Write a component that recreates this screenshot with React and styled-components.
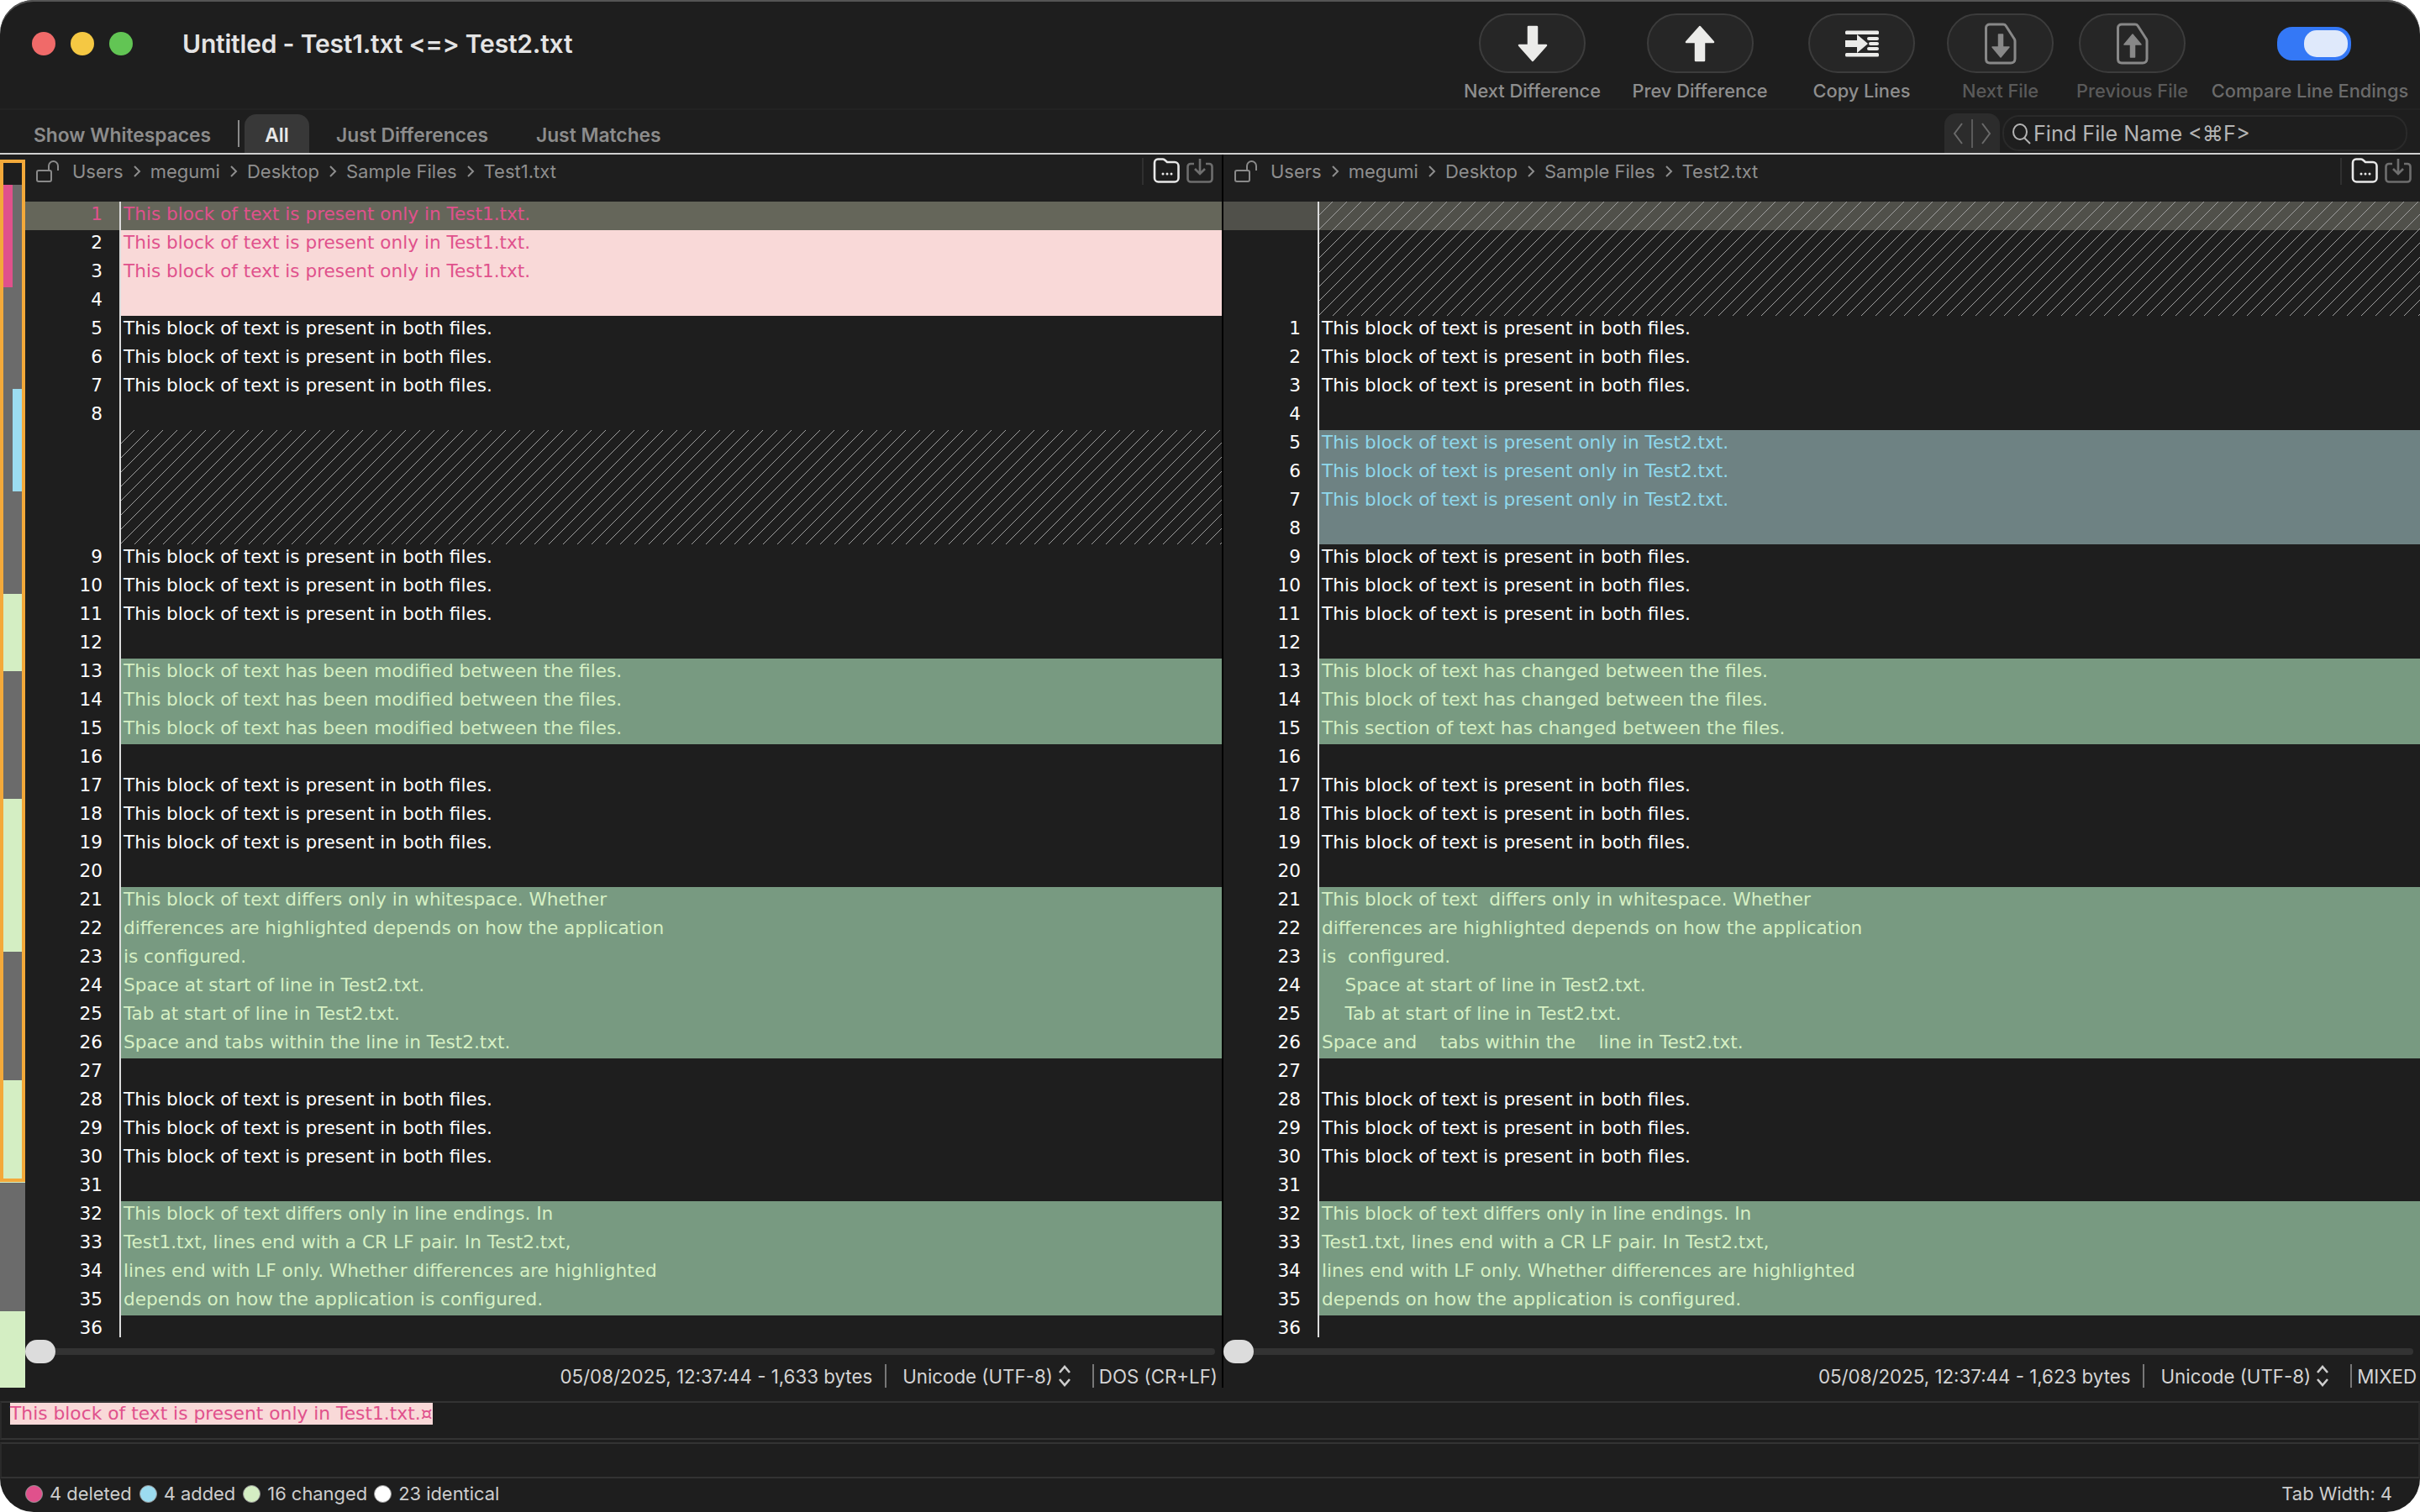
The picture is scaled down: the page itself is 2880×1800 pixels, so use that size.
import React from "react";
import styled, { createGlobalStyle } from "styled-components";

const Global = createGlobalStyle`
  html, body { margin: 0; padding: 0; background: #fff; }
  * { box-sizing: border-box; }
`;
const UI = `Inter, "Liberation Sans", sans-serif`;
const CODE = `"DejaVu Sans", "Noto Sans", sans-serif`;

const Window = styled.div`
  width: 2880px; height: 1800px; background: #1e1e1e; border-radius: 40px;
  overflow: hidden; display: flex; flex-direction: column; font-family: ${UI};
  box-shadow: inset 0 2px 0 #555;
`;
const Toolbar = styled.header`
  height: 131px; display: flex; border-bottom: 2px solid #232323; padding-left: 38px; flex: none;
`;
const Lights = styled.div`
  display: flex; gap: 18px; padding-top: 38px;
`;
const Light = styled.span`
  width: 28px; height: 28px; border-radius: 50%; background: ${p => p.$c};
`;
const Title = styled.div`
  margin-left: 59px; padding-top: 33px; font-size: 30px; line-height: 38px; font-weight: 600; color: #e4e4e4; letter-spacing: -0.2px; white-space: nowrap;
`;
const Tools = styled.div`
  margin-left: auto; display: flex; padding-right: 16px; padding-top: 16px;
`;
const ToolItem = styled.div`
  width: ${p => p.$w}px; margin-left: ${p => p.$ml}px; display: flex; flex-direction: column; align-items: center;
`;
const ToolBtn = styled.div`
  width: 127px; height: 71px; border-radius: 36px; background: #262626; border: 2px solid #3c3c3c;
  display: flex; align-items: center; justify-content: center;
`;
const ToggleWrap = styled.div`
  height: 71px; display: flex; align-items: center; padding-left: 9px;
`;
const Toggle = styled.div`
  width: 88px; height: 40px; border-radius: 18px; background: #3478f6; display: flex; justify-content: flex-end; align-items: center; padding-right: 4px;
`;
const Knob = styled.div`
  width: 52px; height: 32px; border-radius: 15px; background: #dfe9fb;
`;
const ToolLabel = styled.div`
  margin-top: 7px; font-size: 21.8px; line-height: 28px; font-weight: 500; color: ${p => p.$c}; white-space: nowrap;
`;
const TabBar = styled.div`
  height: 51px; display: flex; align-items: flex-end; padding-left: 40px; flex: none;
`;
const Tab = styled.div`
  font-size: 22.8px; font-weight: 600; color: ${p => p.$active ? "#e8e8e8" : "#8c8c8c"}; height: 46px; line-height: 50px;
  white-space: nowrap; margin-left: ${p => p.$ml || 0}px; flex: none;
  ${p => p.$active ? "width:77px;text-align:center;background:#383838;border-radius:14px 14px 0 0;" : ""}
`;
const TabSep = styled.span`
  width: 2px; height: 32px; background: #8a8a8a; margin: 0 0 7px 32px; align-self: flex-end; flex: none;
`;
const NavBox = styled.div`
  margin-left: auto; width: 66px; height: 47px; border-radius: 14px 14px 0 0; background: #2c2c2c;
  display: flex; align-items: center; justify-content: center; flex: none;
`;
const Search = styled.div`
  margin: 0 15px 2px 3px; width: 482px; height: 43px; border: 2px solid #2a2a2a; border-radius: 20px;
  display: flex; align-items: center; padding-left: 9px; gap: 2px; color: #b4b4b4; font-size: 25.2px; flex: none; white-space: nowrap;
`;
const TopLine = styled.div`
  height: 2px; background: #d0d0d0; flex: none;
`;
const Compare = styled.main`
  height: 1484px; display: flex; flex: none;
`;
const Overview = styled.aside`
  width: 30px; flex: none; position: relative; display: flex; flex-direction: column;
`;
const OvSeg = styled.div`
  height: ${p => p.$h}px; flex: none; background: ${p => p.$bg};
`;
const OvSplit = styled.div`
  height: ${p => p.$h}px; flex: none; background: #6b6b6b; display: flex; justify-content: ${p => p.$right ? "flex-end" : "flex-start"};
`;
const OvMark = styled.div`
  width: 15px; background: ${p => p.$bg};
`;
const OvFrame = styled.div`
  position: absolute; left: 0; top: 6px; width: 30px; height: 1217px; border: 4px solid #f3a93a;
`;
const Pane = styled.section`
  width: ${p => p.$w}px; flex: none; display: flex; flex-direction: column; min-width: 0;
`;
const Divider = styled.div`
  width: 2px; flex: none; background: #000; height: 1468px;
`;
const PathBar = styled.div`
  height: 56px; display: flex; align-items: flex-start; flex: none; padding-left: ${p => p.$pl}px;
`;
const Crumbs = styled.div`
  display: flex; margin-left: 15px; height: 40px; align-items: center; font-size: 22px; font-weight: 400; color: #8e8e8e;
`;
const Crumb = styled.span` white-space: nowrap; `;
const Chevron = styled.svg`
  width: 32px; height: 16px; flex: none;
`;
const PathIcons = styled.div`
  margin-left: auto; display: flex; align-items: flex-start; padding: 4px ${p => p.$pr}px 0 0;
`;
const PathSep = styled.span`
  width: 2px; height: 32px; background: #303030; margin-right: 11px;
`;
const Lines = styled.div`
  height: 1352px; flex: none;
`;
const ROW_BG = { none: "transparent", del: "#f9d9d8", add: "#6e8283", chg: "#789a81" };
const ROW_FG = { none: "#fff", del: "#e0518c", add: "#8fd8ec", chg: "#d6f0c4" };
const Row = styled.div`
  height: 34px; display: flex;
  background: ${p => p.$sel ? (p.$dim ? "#50504a" : "#65665a") : "transparent"};
  &:last-child { height: 26px; }
  &:last-child > div { line-height: 22px; padding-top: 4px; }
`;
const Num = styled.div`
  width: 112px; flex: none; text-align: right; padding-right: 20px; font-family: ${CODE}; font-size: 21.6px; line-height: 30px;
  color: ${p => p.$c};
`;
const Code = styled.div`
  flex: 1; min-width: 0; border-left: 2px solid #dcdcdc; padding-left: 3px; font-family: ${CODE}; font-size: 21.6px; line-height: 30px;
  white-space: pre;
  background-color: ${p => ROW_BG[p.$k]}; color: ${p => p.$sel ? ROW_FG.del : ROW_FG[p.$k]};
  ${p => p.$sel && !p.$fill ? "background-color: transparent;" : ""}
  ${p => p.$fill ? `background-image: repeating-linear-gradient(135deg, transparent 0 calc(25% - 1px), #a0a0a0 calc(25% - 1px) 25%); background-size: 34px 34px;` : ""}
`;
const ScrollRow = styled.div`
  height: 30px; flex: none; display: flex; align-items: center; padding-right: 8px;
  margin-top: 2px;
`;
const Thumb = styled.div`
  width: 36px; height: 28px; border-radius: 14px; background: #dcdcdc; flex: none;
`;
const Track = styled.div`
  flex: 1; height: 8px; background: #333; border-radius: 0 4px 4px 0;
`;
const FileStatus = styled.div`
  flex: 1; display: flex; justify-content: flex-end; align-items: center; font-size: 22.3px; color: #d4d4d4; padding-right: ${p => p.$pr}px; padding-bottom: 16px; white-space: nowrap;
`;
const StatusSep = styled.span`
  width: 2px; height: 28px; background: #777; margin: 0 ${p => p.$r}px 0 ${p => p.$l}px;
`;
const DetailBox = styled.div`
  height: ${p => p.$h}px; flex: none; border: 2px solid #333; border-right-color: #2a2a2a; border-left-color:#2a2a2a;
  margin-top: ${p => p.$mt || 0}px; padding-left: 10px;
`;
const DetailText = styled.span`
  display: inline-block; height: 26px; line-height: 25px; background: #f9d9d8; color: #e0518c; font-family: ${CODE}; font-size: 21.8px; white-space: pre; vertical-align: top;
`;
const Footer = styled.footer`
  flex: 1; display: flex; align-items: center; padding: 0 33px 4px 30px; font-size: 21.9px; color: #cdcdcd; white-space: nowrap;
`;
const Dot = styled.span`
  width: 21px; height: 21px; border-radius: 50%; background: ${p => p.$c}; border: 1px solid #999; margin: 0 8px 0 ${p => p.$ml || 0}px; flex: none;
`;
const TabWidth = styled.span` margin-left: auto; `;

const both = "This block of text is present in both files.";
const M = "This block of text has been modified between the files.";
const W = ["This block of text differs only in whitespace. Whether", "differences are highlighted depends on how the application", "is configured.", "Space at start of line in Test2.txt.", "Tab at start of line in Test2.txt.", "Space and tabs within the line in Test2.txt."];
const W2 = ["This block of text  differs only in whitespace. Whether", "differences are highlighted depends on how the application", "is  configured.", "    Space at start of line in Test2.txt.", "    Tab at start of line in Test2.txt.", "Space and    tabs within the    line in Test2.txt."];
const E = ["This block of text differs only in line endings. In", "Test1.txt, lines end with a CR LF pair. In Test2.txt,", "lines end with LF only. Whether differences are highlighted", "depends on how the application is configured."];
const rep = (t, n) => Array(n).fill(t);
const section = (arr, k) => arr.map(t => ({ t, k }));
const common = (mid) => [
  ...section(rep(both, 3), "none"), { t: "", k: "none" },
  ...section(mid[0], "chg"), { t: "", k: "none" },
  ...section(rep(both, 3), "none"), { t: "", k: "none" },
  ...section(mid[1], "chg"), { t: "", k: "none" },
  ...section(rep(both, 3), "none"), { t: "", k: "none" },
  ...section(E, "chg"), { t: "", k: "none" },
];
const leftRows = [
  ...section(rep("This block of text is present only in Test1.txt.", 3), "del"), { t: "", k: "del" },
  ...section(rep(both, 3), "none"), { t: "", k: "none" },
  ...rep({ fill: true, k: "none" }, 4),
  ...common([rep(M, 3), W]),
];
const rightRows = [
  ...rep({ fill: true, k: "none" }, 4),
  ...section(rep(both, 3), "none"), { t: "", k: "none" },
  ...section(rep("This block of text is present only in Test2.txt.", 3), "add"), { t: "", k: "add" },
  ...common([["This block of text has changed between the files.", "This block of text has changed between the files.", "This section of text has changed between the files."], W2]),
];

function CodeLines({ rows, dim }) {
  let n = 0;
  return (
    <Lines>
      {rows.map((r, i) => {
        const num = r.fill ? "" : ++n;
        const sel = i === 0;
        return (
          <Row key={i} $sel={sel} $dim={dim}>
            <Num $c={sel ? "#e0518c" : "#fff"}>{num}</Num>
            <Code $k={r.k} $sel={sel} $fill={r.fill}>{r.t || ""}</Code>
          </Row>
        );
      })}
    </Lines>
  );
}

const ArrowDown = ({ c = "#ebebe9" }) => (
  <svg width="36" height="46" viewBox="0 0 36 46"><path d="M13 3h10v22h11L18 43 2 25h11z" fill={c} stroke={c} strokeWidth="2.5" strokeLinejoin="round" /></svg>
);
const ArrowUp = ({ c = "#ebebe9" }) => (
  <svg width="36" height="46" viewBox="0 0 36 46"><path d="M13 43h10V21h11L18 3 2 21h11z" fill={c} stroke={c} strokeWidth="2.5" strokeLinejoin="round" /></svg>
);
const CopyLinesIcon = () => (
  <svg width="40" height="32" viewBox="0 0 40 32" fill="#ebebe9">
    <rect y="0.5" width="40" height="4.5" rx="1.5" /><rect y="27" width="40" height="4.5" rx="1.5" />
    <rect x="26" y="8" width="14" height="4" rx="2" /><rect x="28" y="14" width="12" height="4" rx="2" /><rect x="26" y="20" width="14" height="4" rx="2" />
    <path d="M0 12h14V5l13 11-13 11v-7H0z" />
  </svg>
);
const FileArrow = ({ up }) => (
  <svg width="38" height="50" viewBox="0 0 38 50" fill="none">
    <path d="M6 2h16c1.500 0 2.500.6 3.200 1.700l9.600 15c.8 1.100 1.200 2 1.200 3.300V43c0 3-2 5-5 5H6c-3 0-4.500-2-4.500-5V6C1.500 3.500 3.500 2 6 2z" stroke="#888" strokeWidth="3" />
    {up
      ? <path d="M16.500 41h5V26h7.500L19 14 9 26h7.500z" fill="#888" stroke="#888" strokeWidth="1.500" strokeLinejoin="round" />
      : <path d="M16.500 14h5v15h7.500L19 41 9 29h7.500z" fill="#888" stroke="#888" strokeWidth="1.500" strokeLinejoin="round" />}
  </svg>
);
const Lock = () => (
  <svg width="28" height="26" viewBox="0 0 28 26" fill="none" stroke="#8a8a8a" strokeWidth="2" style={{ marginTop: 7, flex: "none" }}>
    <rect x="1" y="12" width="17" height="13" rx="2" />
    <path d="M15 12V6.500C15 3.500 17.500 1 20.500 1S26 3.500 26 6.500V12" />
  </svg>
);
const Folder = () => (
  <svg width="32" height="30" viewBox="0 0 32 30" fill="none" style={{ flex: "none" }}>
    <path d="M2 6c0-2.500 1.500-4.500 4-4.500h6c2 0 3 2 5 3.500h9c2.500 0 4.500 2 4.500 4.500V24c0 2.500-2 4.500-4.500 4.500H6.500C4 28.500 2 26.500 2 24z" stroke="#e8e8e8" strokeWidth="2.6" />
    <circle cx="12" cy="19" r="1.500" fill="#e8e8e8" /><circle cx="17" cy="19" r="1.500" fill="#e8e8e8" /><circle cx="22" cy="19" r="1.500" fill="#e8e8e8" />
  </svg>
);
const Save = () => (
  <svg width="32" height="30" viewBox="0 0 32 30" fill="none" stroke="#6e6e6e" strokeWidth="2.600" style={{ flex: "none", marginLeft: 8 }}>
    <path d="M9 7H5C3 7 1.500 8.500 1.500 10.500V25c0 2 1.500 3.500 3.500 3.500h22c2 0 3.500-1.500 3.500-3.500V10.500C30.500 8.500 29 7 27 7h-4" />
    <path d="M16 1v17M10 13l6 6 6-6" />
  </svg>
);
const ChevronGlyph = () => (
  <Chevron viewBox="0 0 32 16" fill="none" stroke="#8e8e8e" strokeWidth="2"><path d="M13 2l6 6-6 6" /></Chevron>
);
const Updown = () => (
  <svg width="16" height="28" viewBox="0 0 16 28" fill="none" stroke="#cdcdcd" strokeWidth="2.600" style={{ marginLeft: 6 }}>
    <path d="M2 10l6-7 6 7M2 18l6 7 6-7" />
  </svg>
);

function PathCrumbs({ file }) {
  const parts = ["Users", "megumi", "Desktop", "Sample Files", file];
  return (
    <Crumbs>
      {parts.map((p, i) => (
        <React.Fragment key={p}>
          {i > 0 && <ChevronGlyph />}
          <Crumb>{p}</Crumb>
        </React.Fragment>
      ))}
    </Crumbs>
  );
}

export default function App() {
  return (
    <Window>
      <Global />
      <Toolbar>
        <Lights>
          <Light $c="#f06a69" /><Light $c="#f5c843" /><Light $c="#62c554" />
        </Lights>
        <Title>Untitled - Test1.txt &lt;=&gt; Test2.txt</Title>
        <Tools>
          <ToolItem $w={163} $ml={0}><ToolBtn><ArrowDown /></ToolBtn><ToolLabel $c="#8e8e8e">Next Difference</ToolLabel></ToolItem>
          <ToolItem $w={162} $ml={37}><ToolBtn><ArrowUp /></ToolBtn><ToolLabel $c="#8e8e8e">Prev Difference</ToolLabel></ToolItem>
          <ToolItem $w={127} $ml={48}><ToolBtn><CopyLinesIcon /></ToolBtn><ToolLabel $c="#8e8e8e">Copy Lines</ToolLabel></ToolItem>
          <ToolItem $w={127} $ml={38}><ToolBtn><FileArrow /></ToolBtn><ToolLabel $c="#5a5a5a">Next File</ToolLabel></ToolItem>
          <ToolItem $w={133} $ml={27}><ToolBtn><FileArrow up /></ToolBtn><ToolLabel $c="#5a5a5a">Previous File</ToolLabel></ToolItem>
          <ToolItem $w={230} $ml={30}><ToggleWrap><Toggle><Knob /></Toggle></ToggleWrap><ToolLabel $c="#6b6b6b">Compare Line Endings</ToolLabel></ToolItem>
        </Tools>
      </Toolbar>
      <TabBar>
        <Tab>Show Whitespaces</Tab>
        <TabSep />
        <Tab $active $ml={6}>All</Tab>
        <Tab $ml={32}>Just Differences</Tab>
        <Tab $ml={57}>Just Matches</Tab>
        <NavBox>
          <svg width="60" height="40" viewBox="0 0 60 40" fill="none" stroke="#6a6a6a" strokeWidth="2">
            <path d="M18 8L9 20l9 12M42 8l9 12-9 12" /><path d="M30 3v34" strokeWidth="1.500" />
          </svg>
        </NavBox>
        <Search>
          <svg width="24" height="28" viewBox="0 0 24 28" fill="none" stroke="#b4b4b4" strokeWidth="2" style={{ flex: "none" }}>
            <ellipse cx="10" cy="12" rx="8" ry="9" /><path d="M15 19l7 7" />
          </svg>
          Find File Name &lt;⌘F&gt;
        </Search>
      </TabBar>
      <TopLine />
      <Compare>
        <Overview>
          <OvSeg $h={36} $bg="#1e1e1e" />
          <OvSplit $h={122}><OvMark $bg="#e0518c" /></OvSplit>
          <OvSeg $h={121} $bg="#6b6b6b" />
          <OvSplit $h={122} $right><OvMark $bg="#9cdcf0" /></OvSplit>
          <OvSeg $h={122} $bg="#6b6b6b" />
          <OvSeg $h={92} $bg="#d4eec3" />
          <OvSeg $h={152} $bg="#6b6b6b" />
          <OvSeg $h={182} $bg="#d4eec3" />
          <OvSeg $h={153} $bg="#6b6b6b" />
          <OvSeg $h={122} $bg="#d4eec3" />
          <OvSeg $h={153} $bg="#6b6b6b" />
          <OvSeg $h={91} $bg="#d4eec3" />
          <OvFrame />
        </Overview>
        <Pane $w={1424}>
          <PathBar $pl={13}>
            <Lock />
            <PathCrumbs file="Test1.txt" />
            <PathIcons $pr={10}><PathSep /><Folder /><Save /></PathIcons>
          </PathBar>
          <CodeLines rows={leftRows} />
          <ScrollRow><Thumb /><Track /></ScrollRow>
          <FileStatus $pr={5}>
            05/08/2025, 12:37:44 - 1,633 bytes
            <StatusSep $l={15} $r={19} />
            Unicode (UTF-8)<Updown />
            <StatusSep $l={25} $r={6} />
            DOS (CR+LF)
          </FileStatus>
        </Pane>
        <Divider />
        <Pane $w={1424}>
          <PathBar $pl={13}>
            <Lock />
            <PathCrumbs file="Test2.txt" />
            <PathIcons $pr={10}><PathSep /><Folder /><Save /></PathIcons>
          </PathBar>
          <CodeLines rows={rightRows} dim />
          <ScrollRow><Thumb /><Track /></ScrollRow>
          <FileStatus $pr={4}>
            05/08/2025, 12:37:44 - 1,623 bytes
            <StatusSep $l={15} $r={19} />
            Unicode (UTF-8)<Updown />
            <StatusSep $l={25} $r={6} />
            MIXED
          </FileStatus>
        </Pane>
      </Compare>
      <DetailBox $h={46}><DetailText>This block of text is present only in Test1.txt.¤</DetailText></DetailBox>
      <DetailBox $h={43} $mt={3} />
      <Footer>
        <Dot $c="#e0518c" />4 deleted
        <Dot $c="#9cdcf0" $ml={9} />4 added
        <Dot $c="#d4eec3" $ml={9} />16 changed
        <Dot $c="#ffffff" $ml={8} />23 identical
        <TabWidth>Tab Width: 4</TabWidth>
      </Footer>
    </Window>
  );
}
